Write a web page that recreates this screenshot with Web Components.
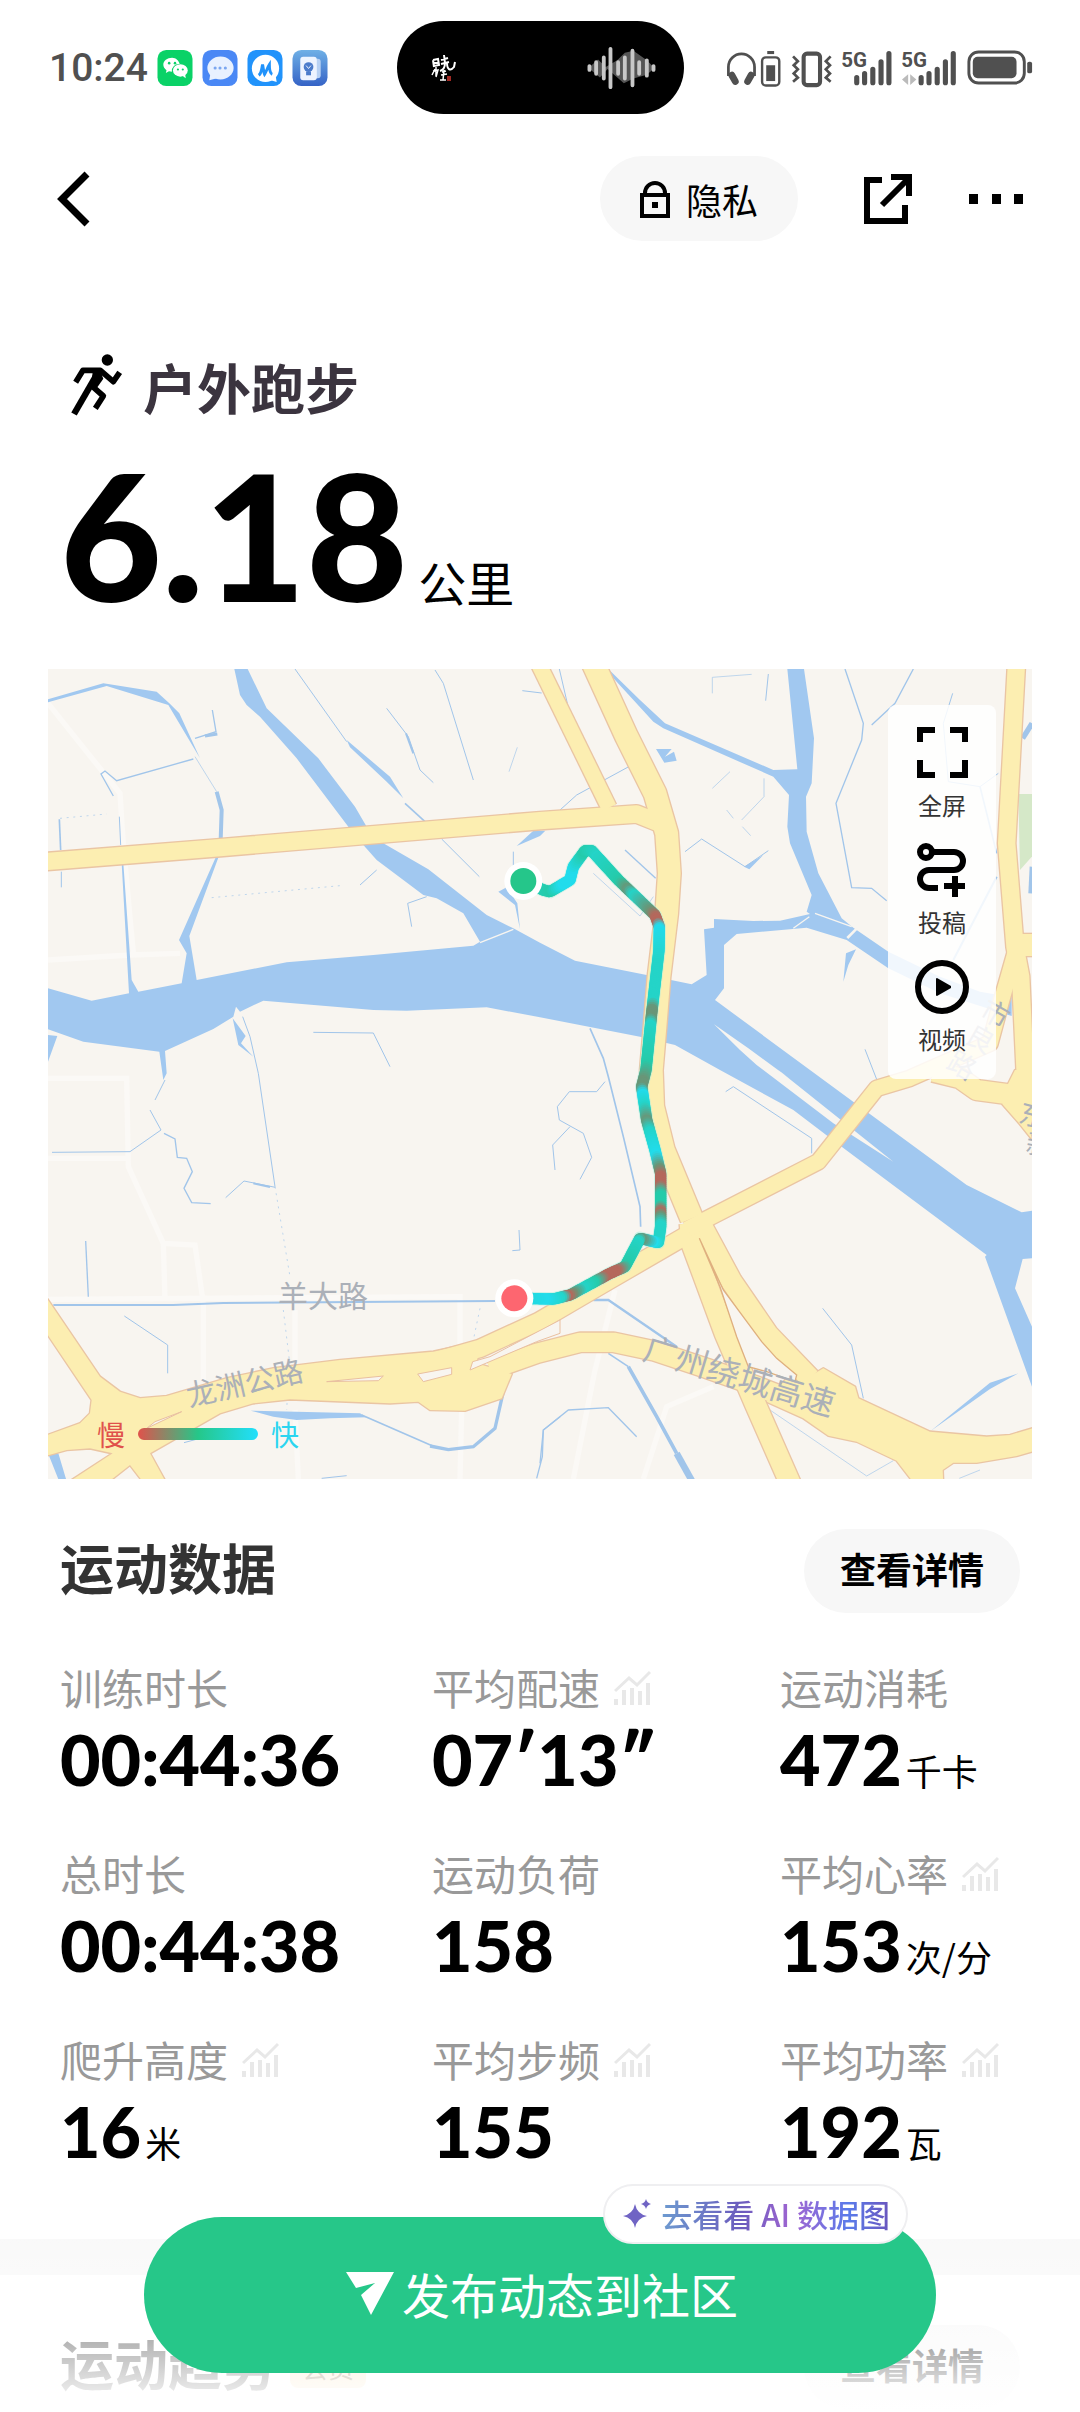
<!DOCTYPE html>
<html lang="zh-CN">
<head>
<meta charset="utf-8">
<meta name="viewport" content="width=device-width, initial-scale=1">
<title>户外跑步</title>
<style>
body {
    background: #fff;
    color: #000;
    font-family: "Noto Sans CJK SC", sans-serif;
    margin: 0;
}
</style>
</head>
<body>
<run-page>
    <status-bar slot="top"></status-bar>
    <page-header slot="top"></page-header>

    <run-summary>
        <span slot="type">户外跑步</span>
        <span slot="distance">6.18</span>
        <span slot="unit">公里</span>
    </run-summary>

    <route-map>
        <map-tool icon="full">全屏</map-tool>
        <map-tool icon="route">投稿</map-tool>
        <map-tool icon="play">视频</map-tool>
    </route-map>

    <data-section>
        <span slot="title">运动数据</span>
        <pill-button slot="action">查看详情</pill-button>
        <stat-item value="00:44:36">训练时长</stat-item>
        <stat-item value="07′13″" trend>平均配速</stat-item>
        <stat-item value="472" unit="千卡">运动消耗</stat-item>
        <stat-item value="00:44:38">总时长</stat-item>
        <stat-item value="158">运动负荷</stat-item>
        <stat-item value="153" unit="次/分" trend>平均心率</stat-item>
        <stat-item value="16" unit="米" trend>爬升高度</stat-item>
        <stat-item value="155" trend>平均步频</stat-item>
        <stat-item value="192" unit="瓦" trend>平均功率</stat-item>
    </data-section>

    <data-section class="next">
        <span slot="title">运动趋势</span>
        <span slot="badge">会员</span>
        <pill-button slot="action">查看详情</pill-button>
    </data-section>

    <publish-dock slot="dock">
        发布动态到社区
        <span slot="tip">去看看 AI 数据图</span>
    </publish-dock>
</run-page>

<script>
(function () {
    /* Shared helper: open shadow root from a markup string */
    const attach = (el, html) => {
        const template = document.createElement("template");
        template.innerHTML = html;
        el.attachShadow({ mode: "open" }).appendChild(template.content.cloneNode(true));
    };

    const buttonReset = `
    button {
        background: none;
        border: 0;
        color: inherit;
        cursor: pointer;
        font: inherit;
        margin: 0;
        padding: 0;
    }
    svg { display: block; }
    `;

    class RunPage extends HTMLElement {
        constructor() {
            super();
            attach(this, `
            <style>
            :host {
                display: flex;
                flex-direction: column;
                height: 100vh;
                overflow: hidden;
                position: relative;
            }
            main {
                flex: 1;
                min-height: 0;
                overflow-y: auto;
                scrollbar-width: none;
            }
            ::slotted(.next) { border-top: 36px solid #f8f8f8; }
            </style>
            <slot name="top"></slot>
            <main><slot></slot></main>
            <slot name="dock"></slot>
            `);
        }
    }

    class StatusBar extends HTMLElement {
        constructor() {
            super();
            attach(this, `
            <style>
            :host {
                align-items: center;
                color: #505050;
                display: grid;
                flex: none;
                grid-template-columns: 1fr 287px 1fr;
                padding: 21px 46px 0;
            }
            svg { display: block; flex: none; }
            .left, .right, .island { align-items: center; display: flex; }
            .left { gap: 9px; }
            time { font: 500 39px/48px Roboto, sans-serif; margin-left: 3px; }
            .island {
                background: #000;
                border-radius: 48px;
                box-sizing: border-box;
                height: 93px;
                justify-content: space-between;
                padding: 0 27px 0 34px;
            }
            .right { gap: 10px; justify-content: flex-end; }
            text { font-family: Roboto, sans-serif; font-weight: 700; }
            </style>
            <div class="left">
                <time>10:24</time>
                <svg width="36" height="36" viewBox="0 0 36 37">
                    <rect width="36" height="37" rx="9" fill="#0ad267"/>
                    <path fill="#fff" d="M15 8c-5 0-9 3.200-9 7.200 0 2.300 1.300 4.200 3.300 5.500l-.7 3 3.200-1.800c1 .3 2 .4 3 .4a7 7 0 0 1 8-7.800C22 11 19 8 15 8z"/>
                    <ellipse cx="23.500" cy="21" rx="7.600" ry="6.400" fill="#fff"/>
                    <path fill="#fff" d="M25 26l4 3-.5-4z"/>
                    <g fill="#0ad267"><circle cx="12" cy="13.500" r="1.300"/><circle cx="18" cy="13.500" r="1.300"/><circle cx="21" cy="20" r="1.100"/><circle cx="26" cy="20" r="1.100"/></g>
                </svg>
                <svg width="36" height="36" viewBox="0 0 36 37">
                    <rect width="36" height="37" rx="9" fill="#4a88f5"/>
                    <ellipse cx="18.500" cy="18.500" rx="13.500" ry="11.800" fill="#e8f1ff"/>
                    <path fill="#e8f1ff" d="M8 25l-1 6 8-2z"/>
                    <g fill="#7ba7f0"><circle cx="13" cy="18.500" r="1.600"/><circle cx="18" cy="18.500" r="1.600"/><circle cx="23.500" cy="18.500" r="1.600"/></g>
                </svg>
                <svg width="36" height="36" viewBox="0 0 36 37">
                    <rect width="36" height="37" rx="9" fill="#2193fb"/>
                    <circle cx="18.500" cy="19" r="14" fill="#fff"/>
                    <path fill="#fff" d="M24 31l6 2-1-6z"/>
                    <path fill="none" stroke="#2193fb" stroke-width="3" d="M11.500 26c3-2 3-7 4-11 1 4 1 8 2 10 2-3 3-7 5-10 0 4 0 9 3 10"/>
                </svg>
                <svg width="36" height="36" viewBox="0 0 36 37">
                    <defs><linearGradient id="note" x2="0" y2="1"><stop stop-color="#6fb0e6"/><stop offset="1" stop-color="#3563c6"/></linearGradient></defs>
                    <rect width="36" height="37" rx="9" fill="url(#note)"/>
                    <rect x="17" y="9" width="12" height="20" rx="3" fill="#b8d2f4"/>
                    <rect x="8" y="7" width="17" height="24" rx="3" fill="#edf4ff"/>
                    <circle cx="16.500" cy="17.500" r="5" fill="#4b7ccb"/>
                    <path d="M14 22h5v4h-5z" fill="#4b7ccb"/>
                    <path d="M14 16l2.500 3 2.500-3" stroke="#edf4ff" fill="none"/>
                </svg>
            </div>
            <div class="island">
                <svg width="26" height="30" viewBox="0 0 26 30" fill="none" stroke="#fff" stroke-width="2">
                    <path d="M2 7l1 7M2 7l5-1 1 6-5 1M3 10h5M10 7l7-2M13 2l1 8M10 11l8-2M14 10c0 5-2 7-5 8M16 10c0 6 3 9 7 4l1-5"/>
                    <path stroke-width="1.500" d="M4 16l-3 6M2 18l5-1-2 7M5 14v9M11 19l4-1M10 22l6-1M13 17l-1 10M9 27h6"/>
                    <rect x="16" y="23" width="4" height="5" fill="#a12a24" stroke="none"/>
                </svg>
                <svg width="72" height="44" viewBox="0 0 72 46">
                    <path fill="#555" d="M2 23l10-9 8 8 12-7 8-8 9-2 14 10 8 8-8 7-14 4-10 5-9-8-8-7-8 9z"/>
                    <path stroke="#c8c8c8" stroke-width="4" stroke-linecap="round" d="M3 21v4M10 17v12M18 12v22M25 3v40M33 17v12M40 12v22M48 5v36M55 17v12M63 15v16M70 21v4"/>
                </svg>
            </div>
            <div class="right">
                <svg width="55" height="40" viewBox="534 144 160 116" fill="none" stroke="#505050" stroke-width="8">
                    <path d="M541 225v-26a38 38 0 0 1 76 0v26"/>
                    <path stroke-width="20" stroke-linecap="round" d="M551 223l10 18M607 223l-10 18"/>
                    <rect x="639" y="171" width="50" height="82" rx="11" stroke-width="7"/>
                    <path stroke-width="9" d="M654 157h20"/>
                    <path stroke-width="26" d="M664 194v46"/>
                </svg>
                <svg width="41" height="40" viewBox="724 144 120 116" fill="none" stroke="#505050" stroke-width="8">
                    <rect x="761" y="160" width="48" height="92" rx="10" stroke-width="12"/>
                    <path d="M730 168l14 14-12 12 12 12-12 12 12 12-14 12M840 168l-14 14 12 12-12 12 12 12-12 12 14 12"/>
                </svg>
                <svg width="50" height="40" viewBox="870 144 146 116" fill="none" stroke="#505050" stroke-width="15" stroke-linecap="round">
                    <text x="868" y="200" font-size="60" fill="#505050" stroke="none">5G</text>
                    <path d="M913 230v15M936 218v27M960 206v39M984 184v61M1007 160v85"/>
                </svg>
                <svg width="54" height="40" viewBox="1044 144 158 116" fill="none" stroke="#505050" stroke-width="15" stroke-linecap="round">
                    <text x="1042" y="200" font-size="60" fill="#505050" stroke="none">5G</text>
                    <path fill="#bbb" stroke="none" d="M1044 236l18-16v32zM1086 236l-18-16v32z"/>
                    <path d="M1100 230v15M1123 218v27M1147 206v39M1171 184v61M1194 160v85"/>
                </svg>
                <svg width="68" height="35" viewBox="0 0 68 36">
                    <rect x="2" y="2" width="57" height="32" rx="10" fill="none" stroke="#505050" stroke-width="3"/>
                    <rect x="6" y="7" width="45" height="22" rx="5" fill="#505050"/>
                    <rect x="62" y="12" width="5" height="12" rx="2" fill="#505050"/>
                </svg>
            </div>
            `);
        }
    }

    class PageHeader extends HTMLElement {
        constructor() {
            super();
            attach(this, `
            <style>
            ${buttonReset}
            :host {
                align-items: center;
                display: flex;
                flex: none;
                padding: 42px 56px 0;
            }
            .privacy {
                align-items: center;
                background: #f7f7f7;
                border-radius: 43px;
                display: flex;
                font-size: 36px;
                gap: 16px;
                height: 85px;
                justify-content: center;
                margin: 0 66px 0 auto;
                width: 198px;
            }
            .share { margin-right: 56px; }
            </style>
            <button aria-label="返回">
                <svg width="34" height="56" viewBox="0 0 34 56" fill="none" stroke="#000" stroke-width="7"><path d="M31 3L6 28l25 25"/></svg>
            </button>
            <button class="privacy">
                <svg width="30" height="38" viewBox="0 0 30 38" fill="none" stroke="#000" stroke-width="4">
                    <rect x="2" y="15" width="26" height="21"/>
                    <path d="M5 15v-2a10 10 0 0 1 20 0v2"/>
                    <path fill="#000" stroke="none" d="M12 22h6v6h-6z"/>
                </svg>
                隐私
            </button>
            <button class="share" aria-label="分享">
                <svg width="49" height="50" viewBox="0 0 49 50" fill="none" stroke="#000" stroke-width="6">
                    <path d="M18 6H3v41h38V31M27 3h18v19M45 4L18 31"/>
                </svg>
            </button>
            <button aria-label="更多">
                <svg width="55" height="10" viewBox="0 0 55 10"><path d="M0 0h9v10H0zM23 0h9v10h-9zM45 0h9v10h-9z"/></svg>
            </button>
            `);
        }
    }

    class RunSummary extends HTMLElement {
        constructor() {
            super();
            attach(this, `
            <style>
            :host { display: block; padding: 110px 60px 47px; }
            h1, p { margin: 0; }
            h1 {
                align-items: center;
                color: #3b343f;
                display: flex;
                font-size: 54px;
                font-weight: 700;
                gap: 13px;
                line-height: 72px;
            }
            p {
                align-items: baseline;
                display: flex;
                gap: 10px;
                height: 176px;
                line-height: 176px;
                margin-top: 23px;
            }
            .distance { font-family: Lato, sans-serif; font-size: 176px; font-weight: 900; }
            .unit { font-size: 48px; line-height: 60px; }
            </style>
            <h1>
                <svg width="70" height="72" viewBox="60 69 210 216" fill="none" stroke="#000" stroke-width="17">
                    <circle cx="202" cy="96" r="17" fill="#000" stroke="none"/>
                    <path stroke-linejoin="round" d="M107 163l22-36h52l39 34 19-28"/>
                    <path stroke-width="19" d="M176 130l-74 128"/>
                    <path fill="#000" stroke="none" d="M158 132h24l8 20-18 26-20 2z"/>
                    <path stroke-linejoin="round" d="M158 176l32 28-24 37"/>
                </svg>
                <slot name="type"></slot>
            </h1>
            <p><span class="distance"><slot name="distance"></slot></span><span class="unit"><slot name="unit"></slot></span></p>
            `);
        }
    }

    class MapTool extends HTMLElement {
        constructor() {
            super();
            const icons = {
                full: `<path d="M6 19V7h15M36 7h15v12M51 37v15H36M21 52H6V37"/>`,
                route: `<circle cx="12" cy="12" r="6"/><path d="M18 12h22a9 9 0 0 1 0 18H15a9 9 0 0 0 0 18h9M41 36v21M30 46h21"/>`,
                play: `<circle cx="28" cy="30" r="24"/><path fill="#000" stroke="none" d="M22 22v16q0 1 1 1l14-8v-2l-14-8q-1 0-1 1z"/>`
            };
            attach(this, `
            <style>
            ${buttonReset}
            :host { display: block; }
            button {
                align-items: center;
                color: #333;
                display: flex;
                flex-direction: column;
                font-size: 24px;
                gap: 4px;
                line-height: 36px;
                width: 100%;
            }
            </style>
            <button>
                <svg width="57" height="60" viewBox="0 0 57 60" fill="none" stroke="#000" stroke-width="6">${icons[this.getAttribute("icon")] || ""}</svg>
                <slot></slot>
            </button>
            `);
        }
    }

    /* The map is surveyed on four sheets; each has its own origin on the 2952 x 2430 canvas */
    const sheets = { nw: [-24, -27], ne: [1476, -27], sw: [-24, 1203], se: [1476, 1203] };

    const trace = (...parts) => {
        const points = [];
        for (let i = 0; i < parts.length; i += 2) {
            const [ox, oy] = sheets[parts[i]];
            parts[i + 1].split(" ").forEach(pair => {
                const [x, y] = pair.split(",").map(Number);
                points.push(`${x + ox} ${y + oy}`);
            });
        }
        return "M" + points.join("L");
    };

    const lakes = [
        trace("nw", "24,985 155,1022 267,1000 245,610 250,610 275,960 295,995 425,970 440,880 417,840 528,590 536,590 448,828 470,960 740,907 1000,885 1300,857 1320,845 1270,760 1190,715 1150,705 1010,600 970,555 925,500 770,295 660,170 620,135 600,105 583,27 623,27 680,145 835,295 945,440 980,500 1030,550 1165,628 1340,765 1420,805",
            "ne", "0,848 105,902 320,945 455,973 500,945 492,808 522,803 522,777 640,783 720,782 810,762 800,755 815,705 750,550 742,500 747,405 700,350 370,205 340,185 195,27 205,27 300,120 375,190 700,330 772,328 742,27 792,27 822,235 815,370 798,410 800,515 835,640 905,775 940,803 1045,875 1200,950 1320,995 1415,1012 1415,1068 1200,1000 1045,925 920,840 800,803 590,822 552,855 552,985 525,1020",
            "se", "810,0 960,110 1280,345 1445,427 1476,422 1476,565 1448,567 1425,655 1476,770 1476,950 1335,560 1340,555 905,230 760,120 540,0",
            "ne", "405,1155 300,1130 0,1072",
            "nw", "1340,1042 1100,1052 1000,1050 670,1022 600,1055 588,1040 580,1070 520,1107 375,1173 380,1240 370,1260 358,1175 130,1145 24,1108"),
        trace("nw", "578,1075 617,1128 603,1150 640,1190 595,1155"),
        trace("nw", "24,1125 52,1128 24,1205"),
        trace("nw", "24,118 190,70 350,95 388,130 418,160 480,295 385,135 200,78 24,127"),
        trace("nw", "920,240 1050,350 1090,415 1040,365 930,262"),
        trace("nw", "1430,558 1480,512 1516,512 1500,528"),
        trace("nw", "1375,695 1400,682 1432,730 1440,808 1425,735"),
        trace("ne", "348,267 395,267 375,290 402,275 410,302 373,308"),
        trace("ne", "918,880 948,868 925,915 910,965"),
        trace("ne", "612,620 670,585 628,628"),
        trace("se", "1172,1083 1350,938 1435,910 1350,957"),
        trace("sw", "632,1022 960,1030 980,1042 870,1045 770,1050 700,1040"),
        trace("sw", "24,1150 55,1150 82,1240 60,1240")
    ];

    /* [width, path] */
    const streams = [
        [2, trace("nw", "465,290 530,395")], [12, trace("nw", "530,395 545,450 542,540")],
        [4, trace("nw", "517,150 528,215 465,235")], [9, trace("nw", "532,222 495,228")],
        [4, trace("nw", "220,408 183,342 195,333 230,362 460,297")],
        [5, trace("nw", "58,478 62,570")], [3, trace("nw", "64,635 64,682")],
        [3, trace("nw", "238,470 242,555")], [3, trace("nw", "765,27 920,245")],
        [5, trace("nw", "1095,430 1155,485")], [3, trace("nw", "1205,537 1318,650")],
        [3, trace("nw", "1040,145 1105,230 1140,330 1180,368")], [6, trace("nw", "1098,220 1120,280")],
        [3, trace("nw", "1185,30 1210,70 1300,360")], [2, trace("nw", "1432,262 1407,335")],
        [3, trace("nw", "1447,92 1505,99")], [3, trace("nw", "1420,575 1420,620")],
        [3, trace("nw", "1160,710 1103,730 1115,800")], [3, trace("nw", "960,675 1010,630")],
        [3, trace("nw", "820,1117 1000,1119 1050,1220")], [3, trace("nw", "608,1070 630,1130 655,1240", "sw", "705,350")],
        [3, trace("ne", "58,27 82,130")], [3, trace("ne", "60,450 110,405 270,318")],
        [2, trace("ne", "517,100 517,52 635,43")], [3, trace("ne", "685,42 677,122")],
        [4, trace("ne", "915,27 970,190 965,240 888,430 935,683 995,685 1040,722")],
        [4, trace("ne", "1120,27 1065,130 995,195")], [3, trace("ne", "1238,100 1210,190 1225,365 1320,380 1375,340")],
        [5, trace("ne", "1320,380 1370,580")], [6, trace("ne", "1370,650 1240,900")],
        [16, trace("ne", "1476,190 1448,235")], [14, trace("ne", "1476,620 1472,700")],
        [2, trace("ne", "517,385 570,335")], [2, trace("ne", "672,355 672,410 605,480")],
        [2, trace("ne", "560,450 580,475")], [2, trace("ne", "607,500 632,527")],
        [3, trace("ne", "435,575 485,537 615,620 685,572")], [4, trace("ne", "255,570 347,655")],
        [2, trace("ne", "160,640 300,768 340,710")],
        [5, trace("ne", "150,1105 190,1195 205,1250", "se", "250,200 300,410 302,470")],
        [3, trace("ne", "975,1168 1010,1258")],
        [3, trace("se", "557,65 580,50 815,205 815,250")],
        [3, trace("se", "195,35 170,65 88,65 52,110 58,150 130,190 155,262 120,328")],
        [3, trace("se", "90,170 38,225 45,300")], [7, trace("se", "160,690 205,690 410,830")],
        [5, trace("se", "205,850 265,890")], [11, trace("se", "265,890 350,1040 410,1150")], [20, trace("se", "410,1150 460,1240")],
        [4, trace("se", "0,1180 10,1080 85,1020 205,1013 290,1100")],
        [3, trace("se", "848,715 935,825 970,985")], [2, trace("se", "690,1020 980,1218 1060,1172")],
        [2, trace("se", "1258,1225 1320,1200")],
        [3, trace("sw", "375,30 345,90")], [3, trace("sw", "330,120 363,180 270,245 36,247")],
        [4, trace("sw", "372,190 405,207 412,262 440,265 457,305 432,355 455,398 512,401")],
        [3, trace("sw", "557,383 612,333 706,352")], [6, trace("sw", "640,340 690,351")],
        [4, trace("sw", "137,513 145,680")], [6, trace("sw", "40,705 400,705 550,699 1365,693")],
        [3, trace("sw", "253,738 383,825 383,910")],
        [5, trace("sw", "965,1035 1190,1133")], [10, trace("sw", "1170,1128 1225,1139 1300,1130 1365,1075 1390,965")],
        [4, trace("sw", "1560,1040 1510,1080 1507,1160 1490,1225")],
        [3, trace("sw", "845,1225 920,1217")], [3, trace("sw", "1437,480 1440,540 1417,542")],
        [3, trace("sw", "432,1118 480,1105")]
    ];

    const dashes = [
        trace("nw", "515,713 900,677"), trace("nw", "60,475 200,462"),
        trace("sw", "705,350 750,620"), trace("sw", "730,720 748,870 740,1020"), trace("sw", "1320,715 1300,810")
    ];

    const lanes = [
        trace("nw", "24,130 240,400 250,555 280,880"),
        trace("nw", "24,900 270,885 420,880"),
        trace("sw", "24,25 260,25 265,290 370,520 465,525 490,700 490,930"),
        trace("sw", "24,265 265,265"), trace("sw", "370,520 375,690"), trace("sw", "24,688 1260,680 1260,830"),
        trace("sw", "765,720 765,870"), trace("sw", "765,1020 775,1227"), trace("sw", "1265,1020 1260,1227"),
        trace("se", "225,660 165,900 100,1227"), trace("se", "520,950 380,1010 310,1227")
    ];

    const roads = [
        [52, trace("nw", "0,606 540,563 1500,482", "ne", "290,462 360,490")],
        [46, trace("ne", "-10,0 207,443")],
        [68, trace("ne", "155,0 260,230 345,400 380,520 388,640 380,760 357,950 345,1100 334,1230", "se", "338,110 370,240 455,445")],
        [62, trace("se", "450,460 455,520 555,790 645,1000 755,1250")],
        [62, trace("se", "470,440 575,635 685,795 810,925")],
        [52, trace("ne", "1430,0 1400,550 1425,860 1442,950 1458,1290")],
        [66, trace("ne", "1425,855 1500,855")],
        [46, trace("ne", "1425,880 1385,1020 1350,1150 1200,1215", "se", "1110,25 1010,55 835,275 440,478")],
        [60, trace("se", "1180,5 1260,25 1310,60 1400,72 1460,140 1500,190")],
        [52, trace("se", "450,490 200,635 -5,755 -180,835 -320,875")],
        [58, trace("sw", "1350,900 1490,850 1620,817", "se", "220,817 340,842 500,895 640,945 780,1000")]
    ];

    const junctions = [
        trace("sw", "0,655 24,690 180,920 240,965 300,985 380,978 560,925 700,895 900,870 1180,845 1320,815 1310,880 1415,912 1385,985 1275,1022 1170,1020 1135,995 1050,1000 750,988 640,1000 540,1030 330,1150 385,1250 320,1250 270,1185 200,1240 80,1240 218,1150 150,1135 80,1140 0,1162 0,1103 120,1060 150,1030 155,990 0,760"),
        trace("se", "740,925 775,940 850,895 945,950 955,985 1170,1085 1340,1100 1410,1095 1500,1068 1500,1138 1430,1158 1310,1178 1240,1178 1208,1200 1210,1250 1130,1250 1070,1172 950,1115 865,1097 790,1045 680,995"),
        trace("se", "1425,0 1500,0 1500,190 1445,140 1380,90")
    ];

    const verges = [
        trace("sw", "860,935 1030,918 1015,932"),
        trace("sw", "1133,912 1235,893 1235,913 1150,935"),
        trace("sw", "1290,900 1298,875 1350,860 1560,750 1560,790 1490,815"),
        trace("sw", "320,1075 345,1055 425,1025")
    ];

    const track = trace("ne", "-50,663 10,690 30,695 90,660 100,620 135,572 155,572 235,660 345,765 358,800 357,870 335,1060 318,1230",
        "se", "305,50 320,150 345,240 362,310 362,470 355,518 300,505 255,590 210,610 90,675 40,687 -53,685");

    const pace = { c: [34, 220, 236], t: [36, 212, 200], g: [37, 203, 170], b: [105, 150, 120], r: [180, 104, 92] };

    /* Pace colours by distance along the track */
    const stops = "0t 90g 130c 190c 250g 300t 400g 435b 460t 530b 555r 570r 590c 700t 810t 835b 860b 880t 1000g 1050b 1071b 1090c 1130t 1172b 1205t 1280c 1320b 1345r 1370r 1400g 1430g 1450r 1465b 1490t 1540t 1560c 1595b 1610t 1690g 1725r 1765r 1800g 1840t 1870b 1890r 1910t 1960c 2100t"
        .split(" ").map(s => [parseInt(s, 10), pace[s.slice(-1)]]);

    class RouteMap extends HTMLElement {
        constructor() {
            super();
            attach(this, `
            <style>
            :host { display: block; margin: 0 48px; position: relative; }
            svg { display: block; height: auto; width: 100%; }
            .tools {
                background: rgba(255, 255, 255, 0.85);
                border-radius: 8px;
                box-sizing: border-box;
                display: flex;
                flex-direction: column;
                gap: 17px;
                padding: 18px 0 22px;
                position: absolute;
                right: 36px;
                top: 36px;
                width: 108px;
            }
            .legend {
                align-items: center;
                bottom: 23px;
                display: flex;
                font-size: 28px;
                gap: 13px;
                left: 49px;
                line-height: 44px;
                position: absolute;
            }
            .slow { color: #e0524b; }
            .fast { color: #2cd5f0; }
            .scale {
                background: linear-gradient(90deg, #e0524b, #25c789 50%, #22dffc);
                border-radius: 6px;
                height: 12px;
                width: 120px;
            }
            text { fill: #abb0b8; font-family: "Noto Sans CJK SC", sans-serif; }
            </style>
            <svg viewBox="0 0 2952 2430" role="img" aria-label="跑步路线">
                <rect width="2952" height="2430" fill="#f8f5f0"/>
                <path fill="#d5e8c8" d="${trace("ne", "1435,402 1480,402 1480,585 1440,630")}"/>
                <path fill="none" stroke="#fbf9f6" stroke-width="16" d="${lanes.join("")}"/>
                <path fill="#a1c8f0" d="${lakes.join("Z")}Z"/>
                <g fill="none" stroke="#a1c5ea">
                    ${streams.map(([w, d]) => `<path stroke-width="${w}" d="${d}"/>`).join("")}
                    <path stroke-width="2" stroke-dasharray="6 14" d="${dashes.join("")}"/>
                </g>
                <path fill="#f8f5f0" d="${trace("ne", "522,1093 625,1165 755,1260", "se", "715,0 1060,275 880,160 670,0", "ne", "650,1215 600,1170")}Z"/>
                <path fill="none" stroke="#f8f5f0" stroke-width="4" d="${trace("nw", "1320,848 1420,808")}${trace("ne", "760,805 808,770")}${trace("ne", "825,760 935,800")}"/>
                <path stroke="#f8f5f0" stroke-width="8" d="${trace("ne", "922,834 950,806")}"/>
                <g fill="none" stroke="#eac5a3" stroke-linejoin="round">
                    ${roads.map(([w, d]) => `<path stroke-width="${w + 8}" d="${d}"/>`).join("")}
                    <path stroke-width="8" d="${junctions.join("Z")}Z"/>
                </g>
                <g fill="none" stroke="#fceeb1" stroke-linejoin="round">
                    ${roads.map(([w, d]) => `<path stroke-width="${w}" d="${d}"/>`).join("")}
                    <path fill="#fceeb1" stroke="none" d="${junctions.join("Z")}Z"/>
                </g>
                <path fill="#f8f5f0" stroke="#e9c0a0" stroke-width="3" d="${verges.join("Z")}Z"/>
                <path fill="#f8f5f0" stroke="#dfb07f" stroke-width="4" d="${trace("se", "478,505 550,660 665,815 710,865 770,915 765,935 680,905 625,890 590,800 540,650")}Z"/>
                <text x="690" y="1914" font-size="90">羊大路</text>
                <text transform="translate(424 2214) rotate(-13)" font-size="89">龙洲公路</text>
                <text transform="translate(1780 2069) rotate(17)" font-size="99">广州绕城高速</text>
                <g font-size="84">
                    <text transform="translate(2790 1040) rotate(30)">市</text>
                    <text transform="translate(2745 1115) rotate(30)">良</text>
                    <text transform="translate(2690 1195) rotate(30)">路</text>
                    <text transform="translate(2908 1358) rotate(14)">东</text>
                    <text transform="translate(2930 1450) rotate(10)">新</text>
                </g>
                <g class="track" fill="none" stroke-width="34" stroke-linecap="round">
                    <path d="${track}" stroke="#aeeedd" stroke-opacity="0.6" stroke-width="40" stroke-linejoin="round"/>
                </g>
                <g fill="#fff"><circle cx="1426" cy="636" r="57"/><circle cx="1399" cy="1888" r="57"/></g>
                <circle cx="1426" cy="636" r="39" fill="#25c68a"/>
                <circle cx="1399" cy="1888" r="39" fill="#fd6670"/>
            </svg>
            <div class="tools"><slot></slot></div>
            <div class="legend"><span class="slow">慢</span><span class="scale"></span><span class="fast">快</span></div>
            `);
        }

        get track() {
            this._track ??= this.shadowRoot.querySelector(".track");
            return this._track;
        }

        connectedCallback() {
            this.drawTrack();
        }

        drawTrack() {
            const ns = "http://www.w3.org/2000/svg";
            const line = this.track.querySelector("path");
            const total = line.getTotalLength();
            const step = 6;

            for (let at = 0; at < total; at += step) {
                const from = line.getPointAtLength(at);
                const to = line.getPointAtLength(Math.min(at + step, total));
                const piece = document.createElementNS(ns, "path");
                piece.setAttribute("d", `M${from.x} ${from.y}L${to.x} ${to.y}`);
                piece.setAttribute("stroke", this.colorAt(at));
                this.track.appendChild(piece);
            }
        }

        colorAt(at) {
            const i = Math.max(1, stops.findIndex(([pos]) => pos > at));
            const [p0, c0] = stops[i - 1];
            const [p1, c1] = stops[i];
            const k = (at - p0) / (p1 - p0);
            return `rgb(${c0.map((v, n) => Math.round(v + (c1[n] - v) * k)).join(",")})`;
        }
    }

    class PillButton extends HTMLElement {
        constructor() {
            super();
            attach(this, `
            <style>
            ${buttonReset}
            :host { display: block; }
            button {
                background: #f7f7f7;
                border-radius: 42px;
                color: #000;
                display: block;
                font-size: 36px;
                font-weight: 700;
                line-height: 78px;
                padding: 0 36px 6px;
            }
            </style>
            <button><slot></slot></button>
            `);
        }
    }

    class DataSection extends HTMLElement {
        constructor() {
            super();
            attach(this, `
            <style>
            :host { display: block; padding: 50px 60px 78px; }
            header { align-items: flex-start; display: flex; gap: 14px; }
            h2 {
                color: #333;
                font-size: 54px;
                font-weight: 700;
                line-height: 76px;
                margin: 0;
            }
            ::slotted([slot="badge"]) {
                align-self: center;
                background: #fbe3bb;
                border-radius: 8px;
                color: #6b4a1c;
                font-size: 26px;
                line-height: 42px;
                padding: 0 12px;
            }
            ::slotted([slot="action"]) { margin-left: auto; }
            .stats {
                display: grid;
                gap: 54px 0;
                grid-template-columns: 372fr 348fr 240fr;
                margin-top: 44px;
            }
            </style>
            <header>
                <h2><slot name="title"></slot></h2>
                <slot name="badge"></slot>
                <slot name="action"></slot>
            </header>
            <div class="stats"><slot></slot></div>
            `);
        }
    }

    class StatItem extends HTMLElement {
        constructor() {
            super();
            attach(this, `
            <style>
            :host { display: block; white-space: nowrap; }
            .label {
                align-items: center;
                color: #999;
                display: flex;
                font-size: 42px;
                gap: 14px;
                line-height: 60px;
            }
            .data {
                align-items: baseline;
                display: flex;
                gap: 4px;
                height: 63px;
                line-height: 66px;
                margin-top: 9px;
            }
            .value { font-family: Lato, sans-serif; font-size: 70px; font-weight: 900; }
            .unit { font-size: 36px; line-height: 48px; }
            </style>
            <div class="label">
                <slot></slot>
                ${this.hasAttribute("trend") ? `
                <svg width="37" height="36" viewBox="0 0 37 36" fill="none" stroke="#e8e8e8">
                    <path stroke-width="3" d="M1 22L15 9l8 7L36 3"/>
                    <path stroke-width="4" d="M2 36v-6M10 36V21M18 36V19M26 36V22M34 36V14"/>
                </svg>` : ""}
            </div>
            <div class="data">
                <span class="value">${this.getAttribute("value")}</span>
                ${this.hasAttribute("unit") ? `<span class="unit">${this.getAttribute("unit")}</span>` : ""}
            </div>
            `);
        }
    }

    class PublishDock extends HTMLElement {
        constructor() {
            super();
            attach(this, `
            <style>
            ${buttonReset}
            :host {
                background: linear-gradient(rgba(255, 255, 255, 0), #fff);
                bottom: 0;
                box-sizing: border-box;
                left: 0;
                padding: 0 144px 39px;
                position: absolute;
                width: 100%;
            }
            .wrap { position: relative; }
            .publish {
                align-items: center;
                background: #26c789;
                border-radius: 78px;
                box-sizing: border-box;
                color: #fff;
                display: flex;
                font-size: 48px;
                gap: 8px;
                height: 156px;
                justify-content: center;
                padding: 0 0 4px 4px;
                width: 100%;
            }
            .tip {
                align-items: center;
                background: #fff;
                border: 2px solid #efeff1;
                border-radius: 30px;
                display: flex;
                font-size: 31px;
                font-weight: 500;
                gap: 10px;
                line-height: 56px;
                padding: 0 16px 0 18px;
                position: absolute;
                right: 28px;
                top: -33px;
            }
            .tip span {
                background: linear-gradient(90deg, #6d9bd0, #6b5bbd 35%, #a065d2 58%, #5a7bea 82%, #6a55bd);
                -webkit-background-clip: text;
                background-clip: text;
                color: transparent;
            }
            </style>
            <div class="wrap">
                <button class="publish">
                    <svg width="48" height="43" viewBox="0 0 48 43" fill="#fff"><path d="M0 0h48L25 43 15 23l14-12-19 5z"/></svg>
                    <span><slot></slot></span>
                </button>
                <button class="tip">
                    <svg width="28" height="32" viewBox="0 0 28 32" fill="#7064c4">
                        <path d="M12 6q2 10 12 12-10 2-12 12Q10 20 0 18 10 16 12 6zM23 1q1 4 5 5-4 1-5 5-1-4-5-5 4-1 5-5z"/>
                    </svg>
                    <span><slot name="tip"></slot></span>
                </button>
            </div>
            `);
        }
    }

    customElements.define("run-page", RunPage);
    customElements.define("status-bar", StatusBar);
    customElements.define("page-header", PageHeader);
    customElements.define("run-summary", RunSummary);
    customElements.define("map-tool", MapTool);
    customElements.define("route-map", RouteMap);
    customElements.define("pill-button", PillButton);
    customElements.define("data-section", DataSection);
    customElements.define("stat-item", StatItem);
    customElements.define("publish-dock", PublishDock);
})();
</script>
</body>
</html>
